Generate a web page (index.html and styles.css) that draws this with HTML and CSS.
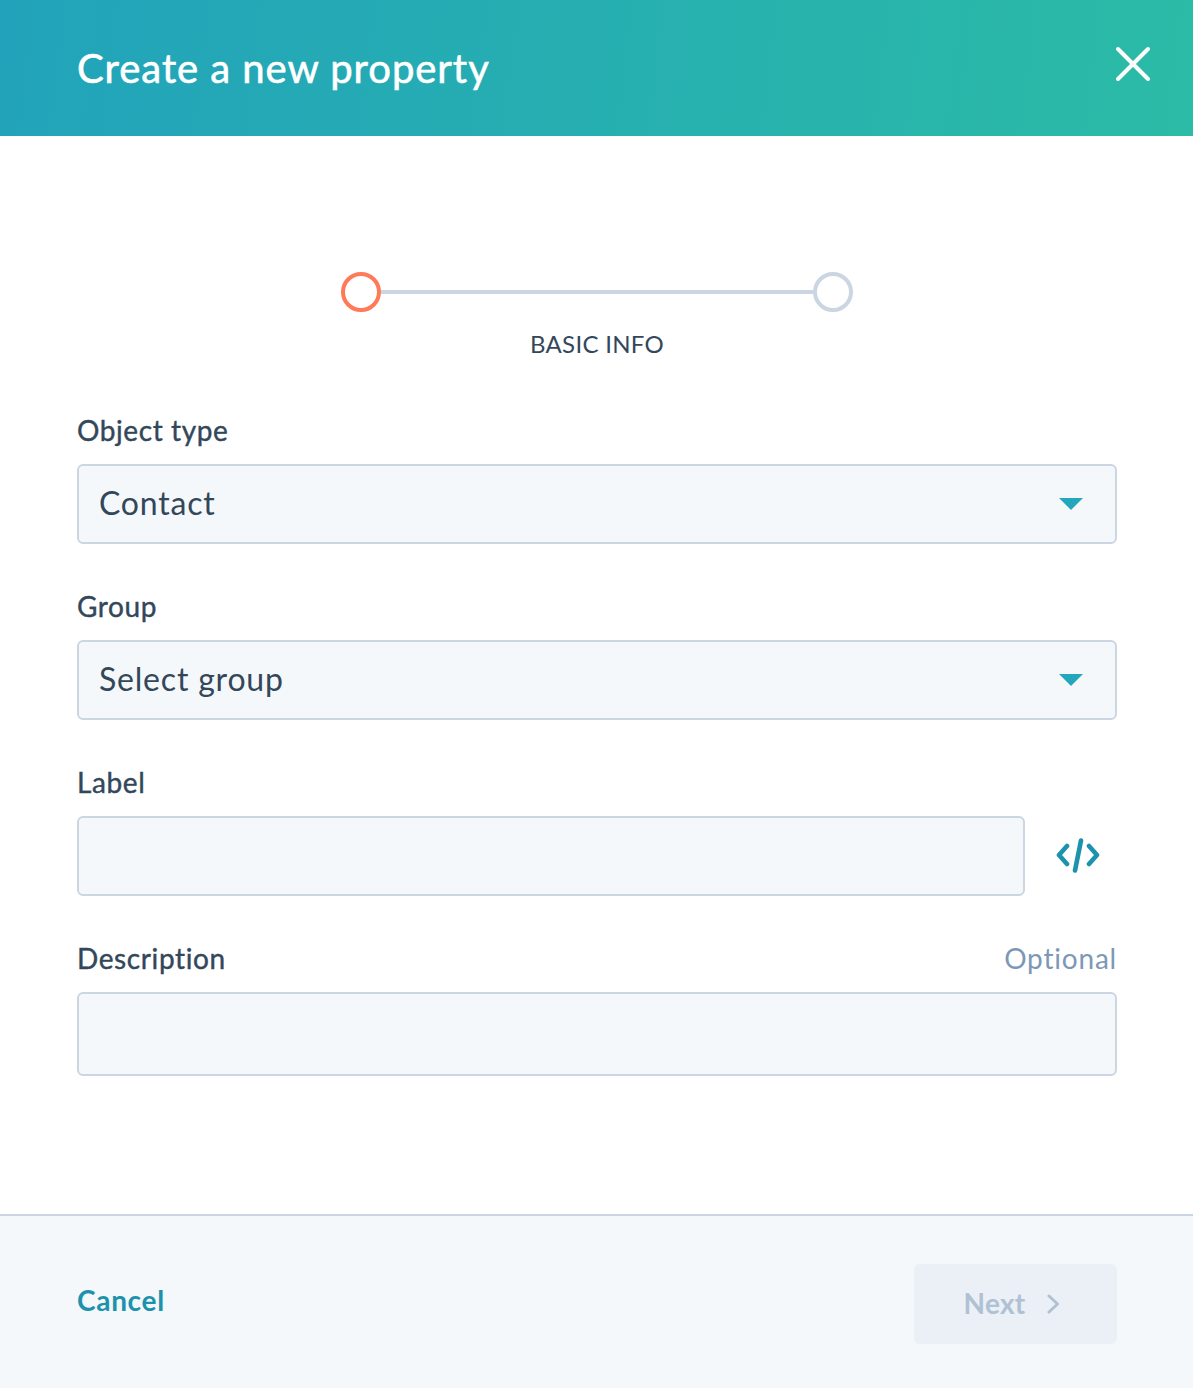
FILE: index.html
```html
<!DOCTYPE html>
<html lang="en">
<head>
<meta charset="utf-8">
<title>Create a new property</title>
<link rel="stylesheet" href="styles.css">
</head>
<body>
<div class="dialog">
  <header class="header">
    <h1 class="title">Create a new property</h1>
    <svg class="close" width="36" height="36" viewBox="0 0 36 36"><path d="M3 3L33 33M33 3L3 33" fill="none" stroke="#fff" stroke-width="4" stroke-linecap="round"/></svg>
  </header>
  <main class="body">
    <div class="stepper">
      <div class="track">
        <span class="dot dot-active"></span>
        <span class="line"></span>
        <span class="dot"></span>
      </div>
      <div class="step-label">BASIC INFO</div>
    </div>
    <div class="field">
      <div class="label-row"><span class="label">Object type</span></div>
      <div class="control select"><span>Contact</span><span class="caret"></span></div>
    </div>
    <div class="field">
      <div class="label-row"><span class="label">Group</span></div>
      <div class="control select"><span>Select group</span><span class="caret"></span></div>
    </div>
    <div class="field">
      <div class="label-row"><span class="label">Label</span></div>
      <div class="input-row">
        <div class="control grow"></div>
        <svg class="code" width="44" height="36" viewBox="0 0 44 36"><g fill="none" stroke="#1c92ad" stroke-width="4.600" stroke-linecap="round" stroke-linejoin="round"><path d="M11 8L3 17L11 26"/><path d="M33 8L41 17L33 26"/><path d="M25 2.500L19 32.500"/></g></svg>
      </div>
    </div>
    <div class="field">
      <div class="label-row"><span class="label">Description</span><span class="optional">Optional</span></div>
      <div class="control tall"></div>
    </div>
  </main>
  <footer class="footer">
    <a class="cancel">Cancel</a>
    <div class="next"><span class="next-text">Next</span><svg width="13" height="20" viewBox="0 0 13 20"><path d="M2 2L10.500 10L2 18" fill="none" stroke="#b0c1d4" stroke-width="3" stroke-linecap="round" stroke-linejoin="round"/></svg></div>
  </footer>
</div>
</body>
</html>
```
FILE: styles.css
```css
* { box-sizing: border-box; }
html, body { margin: 0; padding: 0; background: #fff; }
body { font-family: Lato, "Open Sans", sans-serif; color: #33475b; }
.dialog { width: 1193px; height: 1388px; display: flex; flex-direction: column; }
.header {
  height: 136px; flex: none; display: flex; align-items: center; justify-content: space-between;
  padding: 0 42px 0 77px;
  background: linear-gradient(97deg, #22a3bb 0%, #2bbba6 100%);
}
.title { margin: 0; font-size: 40px; font-weight: 400; color: #fff; line-height: 48px; letter-spacing: 0.95px; -webkit-text-stroke: 0.6px #fff; }
.close { margin-bottom: 8px; }
.body { flex: 1; padding: 136px 76px 0 77px; }
.stepper { display: flex; flex-direction: column; align-items: center; margin-bottom: 54px; }
.track { display: flex; align-items: center; width: 512px; }
.dot { width: 40px; height: 40px; border-radius: 50%; border: 4px solid #cbd6e2; flex: none; }
.dot-active { border-color: #ff7a59; }
.line { flex: 1; height: 4px; background: #cbd6e2; }
.step-label { margin-top: 18px; font-size: 24px; line-height: 28px; color: #33475b; letter-spacing: 0.3px; }
.field { margin-bottom: 44px; }
.label-row { display: flex; justify-content: space-between; align-items: center; height: 36px; margin-bottom: 16px; }
.label { font-size: 28px; letter-spacing: 0.6px; -webkit-text-stroke: 0.4px #33475b; }
.optional { font-size: 28px; color: #7c98b6; letter-spacing: 0.8px; }
.control { height: 80px; border: 2px solid #cbd6e2; border-radius: 6px; background: #f5f8fa; }
.select { display: flex; align-items: center; justify-content: space-between; padding: 0 32px 0 20px; font-size: 32px; letter-spacing: 0.8px; }
.select > span:first-child { margin-bottom: 4px; }
.caret { width: 0; height: 0; border-left: 12px solid transparent; border-right: 12px solid transparent; border-top: 12px solid #22a7bd; }
.input-row { display: flex; align-items: center; gap: 31px; padding-right: 17px; }
.grow { flex: 1; }
.tall { height: 84px; }
.footer {
  height: 174px; flex: none; display: flex; align-items: center; justify-content: space-between;
  padding: 4px 76px 0 77px; border-top: 2px solid #cbd6e2; background: #f5f8fa;
}
.cancel { font-size: 28px; font-weight: 700; color: #1c92ad; letter-spacing: 0.7px; margin-bottom: 8px; }
.next {
  width: 203px; height: 80px; border-radius: 6px; background: #eaf0f6; color: #b0c1d4;
  display: flex; align-items: center; justify-content: center; gap: 21px; padding-right: 8px; font-size: 28px; font-weight: 700;
}
.next-text { margin-bottom: 3px; letter-spacing: 0.3px; }
```
